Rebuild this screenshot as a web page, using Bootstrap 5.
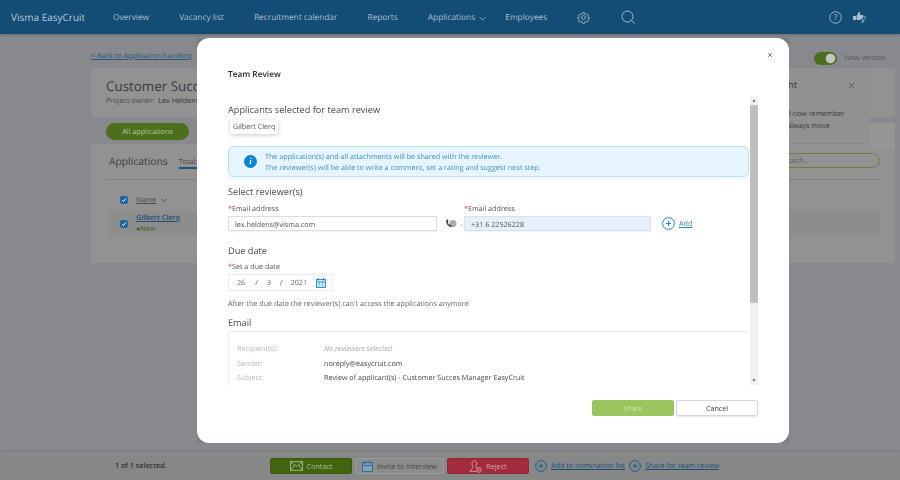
<!DOCTYPE html>
<html lang="en">
<head>
<meta charset="utf-8">
<title>Team Review</title>
<link href="https://cdn.jsdelivr.net/npm/bootstrap@5.3.0/dist/css/bootstrap.min.css" rel="stylesheet">
<style>
html,body{height:480px;overflow:hidden}
body{font-family:"Open Sans","Liberation Sans",sans-serif;font-size:7.2px;background:#87898c;color:#3c3c3c;line-height:12px;text-rendering:geometricPrecision}
a{color:#1d5579}
.topbar{height:34px;background:#134d75;color:#a9bfcd;font-size:8.3px;padding:0 0 0 11px;box-shadow:0 1px 3px rgba(0,0,0,.25)}
.topbar .brand{font-size:10px;width:102px;color:#b6c8d4}
.topbar .gapped{gap:30.2px}
.topbar .gapped>span{padding-top:2px}
.pagewrap{padding:0 5px 0 91px;height:418px}
.backlink{height:34px;padding-top:16px;color:#26597f}
.headpanel{height:49px;background:#929292;padding:10px 15px;position:relative}
.headpanel .ttl{font-size:13.4px;line-height:17px;color:#3a3a3a;white-space:nowrap}
.ownerline{color:#4a4a4a;white-space:nowrap}
.noticebox{position:absolute;right:25px;top:0;width:240px;height:75px;background:#919191;color:#3a3a3a}
.pillrow{height:27px;padding:6px 0 0 15px}
.pillgreen{width:83px;height:17px;border-radius:9px;background:#4c6f1c;color:#b6c6a0}
.sideblock{width:25px;height:26px;background:#969696}
.appspanel{height:119px;background:#929292;padding:9px 15px 0 15px}
.appshead{height:27px;border-bottom:1px solid #808080;font-size:10.3px;gap:11px}
.totallink{font-size:7.2px;border-bottom:2px solid #1d5579;line-height:10px;color:#444}
.searchpill{width:105px;height:15px;border:1px solid #66843a;border-radius:8px;color:#5e5e5e;padding-left:6px;font-style:italic;font-size:7.2px}
.boxcheck{width:8px;height:8px;border-radius:2px;background:#1c6aa5;color:#dfe9f0}
.apphead{height:31px;padding:9px 0 0 14px;gap:8px}
.approw{height:25px;margin-left:3px;background:#8d8d8d;padding:0 0 0 11px;gap:8px}
.appname{font-weight:600;color:#1a4f78;text-decoration:underline}
.newtag{color:#3d6515}
.bottombar{height:28px;background:#868787;padding:0 0 0 115px;box-shadow:0 -1px 2px rgba(0,0,0,.12)}
.bottombar .selcount{width:155px;font-weight:600;color:#303030}
.barbtn{height:16px;border-radius:2px;font-size:7.2px;line-height:14px;padding:0;gap:4px}
.bcontact{width:82px;background:#40640f;border:1px solid #3a5a10;color:#a8c090}
.binvite{width:89px;background:#8c8c8c;border:1px solid #9a9a9a;color:#444;margin-left:3px}
.breject{width:82px;background:#a22c3c;border:1px solid #8e2a38;color:#d8a8ae;margin-left:3px}
.barlink{color:#1a4e74;text-decoration:underline}
.teamdlg{display:block;position:fixed;top:38px;left:197px;width:592px;height:405px;background:transparent;z-index:10}
.teamcontent{height:405px;border:0;border-radius:12px;box-shadow:0 0 32px rgba(0,0,0,.28);padding:0 31px;display:block;background:#fff}
.dlgtitle{font-size:8.3px;font-weight:600;height:58px;padding-top:30px;color:#2b2b2b;line-height:13px;margin:0}
.closex{position:absolute;right:15px;top:13px;width:8px;height:8px;padding:0;border:0;background:transparent;line-height:0}
.scrollarea{height:289px;gap:1px}
.scrollbody{width:521px;overflow:hidden;color:#4a4a4a}
.sbtrack{width:8px;background:#f1f1f1}
.sbthumb{height:198px;background:#bfbfbf}
.sbarrow{height:9px;color:#777;font-size:6px;line-height:9px;text-align:center}
.secttl{font-size:9.2px;height:14px;line-height:16px;color:#4a4a4a;font-weight:400;margin:0}
.chip{display:inline-block;height:14px;margin:4px 0 0 2px;padding:0 3px;line-height:14px;background:#fff;border-radius:2px;box-shadow:0 1px 4px rgba(0,0,0,.22);color:#555}
.infobox{height:31px;margin:12px 0 7px;padding:0 0 0 15px;background:#e6f5ff;border:1px solid #b8e0fb;border-radius:6px;color:#3f8fcf;font-size:7.2px;line-height:11px;box-shadow:0 2px 6px rgba(20,120,200,.08)}
.infotext{padding-top:2px}
.infodot{width:13px;height:13px;border-radius:50%;background:#0a84d8;color:#fff;font:italic 700 9px/13px "Liberation Serif",serif;text-align:center;margin-right:8px}
.fldlabel{height:12px;line-height:14px;color:#555}
.fldlabel b{color:#d0344a;font-weight:400}
.fieldbox{height:15px;min-height:0;padding:0 6px;font-size:7.2px;line-height:16px;border:1px solid #dcdcdc;border-radius:1px;color:#4f4f4f;box-shadow:0 1px 2px rgba(0,0,0,.06)}
.fielda{width:209px;margin-top:2px}
.fieldb{width:187px;margin-top:2px;background:#e7effb;border-color:#d7e0ee;padding-left:6px}
.phonebit{width:27px;padding-left:8px;color:#999;font-size:6px}
.addlink{color:#3d7fb5;text-decoration:underline}
.datebox{width:105px;height:17px;margin-top:2px;border:1px solid #ececec;color:#666;padding:0 6px 0 8px}
.hint{color:#666;margin-top:6px;height:12px;line-height:14px}
.mailbox{margin-top:2px;border:1px solid #eeeeee;border-right:0;border-bottom:0;padding:10px 0 0 8px;height:60px}
.mailrow{height:14.5px;line-height:14.5px}
.mailrow .mk{width:87px;color:#b8b8b8}
.mailrow .mv{color:#454545}
.mailrow .mnone{color:#a8a8a8;font-style:italic}
.dlgactions{height:59px;padding:15px 0 0 0;gap:2px;width:530px}
.actshare{width:82px;height:16px;background:#9bc65e;border:1px solid #9bc65e;color:#cfe3ae;font-size:7.2px;line-height:14px;padding:0;border-radius:2px}
.actcancel{width:82px;height:16px;background:#fff;border:1px solid #d6d6d6;color:#444;font-size:7.2px;line-height:14px;padding:0;border-radius:2px;box-shadow:0 1px 2px rgba(0,0,0,.1)}
</style>
</head>
<body>
<nav class="topbar d-flex align-items-center">
  <span class="brand">Visma EasyCruit</span>
  <div class="d-flex align-items-center gapped">
    <span>Overview</span><span>Vacancy list</span><span>Recruitment calendar</span><span>Reports</span>
    <span class="d-flex align-items-center gap-1" style="margin-right:-11px">Applications
      <svg width="7" height="5" viewBox="0 0 7 5"><path d="M.5 1l3 3 3-3" fill="none" stroke="#a9bfcd" stroke-width=".8"/></svg></span>
    <span>Employees</span>
    <svg width="13" height="13" viewBox="0 0 24 24" fill="none" stroke="#a9bfcd" stroke-width="1.6"><circle cx="12" cy="12" r="3.5"/><path d="M10 2h4l.7 3 2.4 1 2.7-1.6 2.8 2.8-1.6 2.7 1 2.4 3 .7v0l-3 .7-1 2.4 1.6 2.7-2.8 2.8-2.7-1.6-2.4 1-.7 3h-4l-.7-3-2.4-1-2.7 1.6-2.8-2.8 1.6-2.7-1-2.4-3-.7 3-.7 1-2.4-1.6-2.7 2.8-2.8 2.7 1.6 2.4-1z" transform="translate(1.2 1.2) scale(.9)"/></svg>
    <svg width="14" height="14" viewBox="0 0 14 14" fill="none" stroke="#a9bfcd" stroke-width="1"><circle cx="6.5" cy="6.5" r="5.5"/><path d="M10.5 10.5l3 3"/></svg>
  </div>
  <div class="ms-auto d-flex align-items-center" style="padding-right:33px;gap:11px">
    <svg width="13" height="13" viewBox="0 0 13 13"><circle cx="6.5" cy="6.5" r="5.8" fill="none" stroke="#a9bfcd" stroke-width=".9"/><text x="6.5" y="9.3" text-anchor="middle" font-size="8" fill="#a9bfcd" font-family="Open Sans">?</text></svg>
    <svg width="14" height="12" viewBox="0 0 14 12"><path d="M0 5h3v4H0zM3.500 5L6 1h1l0 3h3v3l-3 2H3.500z" fill="#a9bfcd"/><path d="M10 5l3 1.500-2 2-1 3h-1l.5-3" fill="none" stroke="#a9bfcd" stroke-width=".8"/></svg>
  </div>
</nav>

<main class="pagewrap">
  <div class="backlink d-flex justify-content-between" style="padding-right:9px">
    <a href="#" style="color:#26597f">&lt; Back to Application handling</a>
    <span class="d-flex align-items-center gap-2" style="color:#555;height:12px;margin-top:2px">
      <svg width="23" height="13" viewBox="0 0 23 13"><rect width="23" height="13" rx="6.5" fill="#4c6f1c"/><circle cx="16.5" cy="6.5" r="4.8" fill="#c4c4c4"/></svg>
      New version
    </span>
  </div>
  <section class="headpanel">
    <div class="ttl">Customer Succes</div>
    <div class="ownerline">Project owner: &nbsp;<span style="color:#333">Lex Heldens</span></div>
    <aside class="noticebox">
      <div class="d-flex justify-content-between" style="padding:11px 15px 0 8px;height:40px"><span style="font-size:9.2px;margin-left:150px">nt</span><svg width="7" height="7" viewBox="0 0 7 7" style="margin-top:3px"><path d="M1 1l5 5M6 1L1 6" stroke="#555" stroke-width=".9"/></svg></div>
      <div style="padding-left:157px;white-space:nowrap;overflow:hidden">ll now remember<br>always move</div>
    </aside>
  </section>
  <div class="pillrow d-flex">
    <div class="pillgreen d-flex align-items-center justify-content-center">All applications</div>
    <div class="sideblock ms-auto"></div>
  </div>
  <section class="appspanel">
    <div class="appshead d-flex align-items-start" style="padding-left:3px">
      <span style="line-height:19px">Applications</span>
      <span class="totallink mt-1">Total:</span>
      <span class="searchpill ms-auto d-flex align-items-center">Search...</span>
    </div>
    <div class="apphead d-flex align-items-center">
      <span class="boxcheck d-flex align-items-center justify-content-center"><svg width="6" height="6" viewBox="0 0 6 6"><path d="M1 3l1.500 1.500L5 1.500" fill="none" stroke="#dfe9f0" stroke-width="1"/></svg></span>
      <span style="text-decoration:underline;color:#4a4a4a">Name</span>
      <svg width="7" height="5" viewBox="0 0 7 5" style="margin-left:-4px"><path d="M1 1l2.500 2.500L6 1" fill="none" stroke="#444" stroke-width=".8"/></svg>
    </div>
    <div class="approw d-flex align-items-center">
      <span class="boxcheck d-flex align-items-center justify-content-center"><svg width="6" height="6" viewBox="0 0 6 6"><path d="M1 3l1.500 1.500L5 1.500" fill="none" stroke="#dfe9f0" stroke-width="1"/></svg></span>
      <div style="line-height:11px">
        <div class="appname">Gilbert Clerq</div>
        <div class="newtag">●New</div>
      </div>
    </div>
  </section>
</main>

<footer class="bottombar d-flex align-items-center">
  <span class="selcount">1 of 1 selected.</span>
  <button class="btn barbtn bcontact d-flex align-items-center justify-content-center">
    <svg width="13" height="10" viewBox="0 0 12 9" fill="none" stroke="#a8c090" stroke-width=".8"><rect x=".5" y=".5" width="11" height="8"/><path d="M.5.500L6 5l5.500-4.500M.5 8.500L4 4M11.500 8.500L8 4"/></svg>Contact</button>
  <button class="btn barbtn binvite d-flex align-items-center justify-content-center">
    <svg width="11" height="11" viewBox="0 0 10 10"><rect x=".5" y="1.500" width="9" height="8" fill="#7fa0ba" stroke="#28658f" stroke-width=".8"/><path d="M2.500 0v2.500M7.500 0v2.500M1 4h8" stroke="#28658f" stroke-width=".8"/></svg>Invite to interview</button>
  <button class="btn barbtn breject d-flex align-items-center justify-content-center">
    <svg width="13" height="13" viewBox="0 0 12 12" fill="none" stroke="#d8a8ae" stroke-width=".8"><path d="M4 1.200c1.800-.8 3.400.2 3.200 2.300-.1 1.200-.9 1.800-.9 2.800 0 .6.6 1 1.200 1.200M4 1.200C2.400 2 2.500 4.600 3.200 5.500c.3.600.3 1.800-.4 2.700L.8 10.500h6"/><circle cx="9.200" cy="9.200" r="2.200"/><path d="M8 9.200h2.400"/></svg>Reject</button>
  <span class="d-flex align-items-center" style="margin-left:6px;gap:4px">
    <svg width="12" height="12" viewBox="0 0 12 12" fill="none" stroke="#1a5f92" stroke-width="1"><circle cx="6" cy="6" r="5.400"/><path d="M6 3.500v5M3.500 6h5"/></svg>
    <a href="#" class="barlink">Add to nomination list</a>
    <svg width="12" height="12" viewBox="0 0 12 12" fill="none" stroke="#1a5f92" stroke-width="1"><circle cx="6" cy="6" r="5.400"/><path d="M6 3.500v5M3.500 6h5"/></svg>
    <a href="#" class="barlink">Share for team review</a>
  </span>
</footer>

<div class="modal teamdlg" role="dialog">
  <div class="modal-content teamcontent position-relative">
    <button class="closex" aria-label="Close"><svg width="8" height="8" viewBox="0 0 8 8"><path d="M2 2l4 4M6 2L2 6" stroke="#777" stroke-width=".9"/></svg></button>
    <h5 class="dlgtitle">Team Review</h5>
    <div class="scrollarea d-flex">
      <div class="scrollbody">
        <h6 class="secttl" style="margin-top:6px">Applicants selected for team review</h6>
        <span class="chip">Gilbert Clerq</span>
        <div class="alert infobox d-flex align-items-center">
          <span class="infodot">i</span>
          <div class="infotext">The application(s) and all attachments will be shared with the reviewer.<br>The reviewer(s) will be able to write a comment, set a rating and suggest next step.</div>
        </div>
        <h6 class="secttl">Select reviewer(s)</h6>
        <div class="d-flex" style="margin-top:4px">
          <div>
            <div class="fldlabel"><b>*</b>Email address</div>
            <div class="form-control fieldbox fielda">lex.heldens@visma.com</div>
          </div>
          <div class="d-flex align-items-center phonebit" style="margin-top:14px">
            <svg width="12" height="11" viewBox="0 0 12 11"><circle cx="8" cy="5.500" r="3.600" fill="#aaa"/><path d="M1 2.500c0 3.500 2.500 6.500 5 6.500l1-1.500-2-1.200-.8.6C3.500 6 3 5 2.800 4l.8-.5-.8-2.200z" fill="#444"/></svg>
            <span style="margin-left:2px">⌄</span>
          </div>
          <div>
            <div class="fldlabel"><b>*</b>Email address</div>
            <div class="form-control fieldbox fieldb">+31 6 22526228</div>
          </div>
          <div class="d-flex align-items-center" style="margin:14px 0 0 11px;gap:4px;height:15px">
            <svg width="13" height="13" viewBox="0 0 13 13" fill="none" stroke="#1a8ad8" stroke-width="1"><circle cx="6.500" cy="6.500" r="5.900"/><path d="M6.500 4v5M4 6.500h5"/></svg>
            <a href="#" class="addlink">Add</a>
          </div>
        </div>
        <h6 class="secttl" style="margin-top:12px">Due date</h6>
        <div class="fldlabel" style="margin-top:3px"><b>*</b>Set a due date</div>
        <div class="datebox d-flex align-items-center">
          <span>26</span><span style="margin-left:10px">/</span><span style="margin-left:9px">3</span><span style="margin-left:9px">/</span><span style="margin-left:8px">2021</span>
          <svg class="ms-auto" width="10" height="10" viewBox="0 0 10 10"><rect x=".5" y="1.500" width="9" height="8" fill="#d8ebfa" stroke="#1a8ad8" stroke-width=".9"/><path d="M2.500 0v2.500M7.500 0v2.500M1 4h8M3 5.500h1M6 5.500h1M3 7.500h1M6 7.500h1" stroke="#1a8ad8" stroke-width=".9"/></svg>
        </div>
        <div class="hint">After the due date the reviewer(s) can't access the applications anymore</div>
        <h6 class="secttl" style="margin-top:6px">Email</h6>
        <div class="mailbox">
          <div class="mailrow d-flex"><span class="mk">Recipient(s):</span><span class="mnone">No reviewers selected</span></div>
          <div class="mailrow d-flex"><span class="mk">Sender:</span><span class="mv">noreply@easycruit.com</span></div>
          <div class="mailrow d-flex"><span class="mk">Subject:</span><span class="mv">Review of applicant(s) - Customer Succes Manager EasyCruit</span></div>
        </div>
      </div>
      <div class="sbtrack d-flex flex-column">
        <div class="sbarrow">▴</div>
        <div class="sbthumb"></div>
        <div class="flex-grow-1"></div>
        <div class="sbarrow">▾</div>
      </div>
    </div>
    <div class="dlgactions d-flex justify-content-end">
      <button class="btn actshare">Share</button>
      <button class="btn actcancel">Cancel</button>
    </div>
  </div>
</div>
<script src="https://cdn.jsdelivr.net/npm/bootstrap@5.3.0/dist/js/bootstrap.bundle.min.js"></script>
</body>
</html>
